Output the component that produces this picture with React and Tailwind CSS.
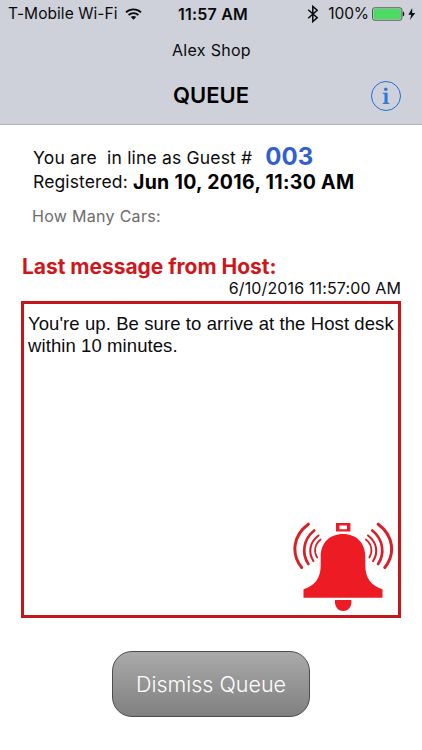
import { clsx } from "clsx";

const guest = {
  number: "003",
  registered: "Jun 10, 2016, 11:30 AM",
};

const message = {
  sentAt: "6/10/2016 11:57:00 AM",
  body: "You're up. Be sure to arrive at the Host desk within 10 minutes.",
};

function WifiIcon({ className }) {
  return (
    <svg viewBox="0 0 17 12" className={className} fill="none" stroke="#0b0b0d" strokeWidth="1.8">
      <path d="M1 4.4C5.2.3 11.8.3 16 4.4" />
      <path d="M3.6 7C6.4 4.4 10.6 4.4 13.4 7" />
      <path d="M8.5 11.8 5.8 9.1C7.3 7.7 9.7 7.7 11.2 9.1Z" fill="#0b0b0d" stroke="none" />
    </svg>
  );
}

function BluetoothIcon({ className }) {
  return (
    <svg viewBox="0 0 12 18" className={className} fill="none" stroke="#0b0b0d" strokeWidth="1.5">
      <path d="M1.2 4.8 10.2 12.8 5.8 16.6V1.4L10.2 5.2 1.2 13.2" />
    </svg>
  );
}

function BatteryIcon({ className }) {
  return (
    <svg viewBox="0 0 44 14" className={className}>
      <rect x="0.5" y="0.8" width="29.4" height="12.4" rx="2" fill="#c6d5cb" stroke="#55585c" strokeWidth="1" />
      <rect x="1.5" y="1.8" width="27.4" height="10.4" rx="1" fill="#4cd964" />
      <path d="M30.8 4.6c2 .6 2 4.2 0 4.8Z" fill="#0b0b0d" />
      <path d="M40.2 1 36.4 7.7h2.9L37.9 13l5.3-6.9h-3Z" fill="#0b0b0d" />
    </svg>
  );
}

function BellIcon({ className }) {
  return (
    <svg viewBox="0 0 102 92" className={className}>
      <g fill="#ed1c24">
        <path fillRule="evenodd" d="M44 1h14.4v8.6H44Zm3.4 2.5v3.7h7.6V3.5Z" />
        <path d="M51 12c13.5 0 22.3 9.2 22.3 22.5v9C73.3 56 79 63.5 90.5 67.3v8.4h-79v-8.4C23 63.5 28.7 56 28.7 43.5v-9C28.7 21.2 37.5 12 51 12Z" />
        <path d="M43 78h16.4c.8 6.2-2.8 11-8.2 11s-9-4.8-8.2-11Z" />
      </g>
      <g fill="none" stroke="#d92029" strokeLinecap="round">
        <path d="M16.3 2.2C1 13.5-1.2 32 9.7 45.5" strokeWidth="3" />
        <path d="M22.2 8.5C11 17.5 9.5 32 16.4 42" strokeWidth="2.7" />
        <path d="M26.5 13.5C17.5 20.5 16 30.5 21.4 39" strokeWidth="2.1" />
        <path d="M28.6 17.5C22.5 22.5 21.5 29.5 25.2 35.5" strokeWidth="1.7" />
        <path d="M86.2 2.2C101.5 13.5 103.7 32 92.8 45.5" strokeWidth="3" />
        <path d="M80.3 8.5C91.5 17.5 93 32 86.1 42" strokeWidth="2.7" />
        <path d="M76 13.5C85 20.5 86.5 30.5 81.1 39" strokeWidth="2.1" />
        <path d="M73.9 17.5C80 22.5 81 29.5 77.3 35.5" strokeWidth="1.7" />
      </g>
    </svg>
  );
}

function StatusBar() {
  return (
    <div className="grid h-7 grid-cols-[1fr_auto_1fr] items-center pr-[6px] pl-2 leading-7">
      <div className="flex items-center gap-2">
        <span className="text-[15.5px] tracking-[0.05px]">T-Mobile Wi-Fi</span>
        <WifiIcon className="h-[12px] w-[17px]" />
      </div>
      <span className="pl-[2px] text-[16px] font-semibold tracking-[0.2px]">11:57 AM</span>
      <div className="flex items-center justify-end">
        <BluetoothIcon className="mr-[9px] h-[18px] w-3" />
        <span className="mr-[3px] text-[15.5px] tracking-[-0.1px]">100%</span>
        <BatteryIcon className="h-[14px] w-11" />
      </div>
    </div>
  );
}

function Header() {
  return (
    <header className="flex h-[125px] flex-col border-b border-[#b2b2b7] bg-[#ced1d9]">
      <StatusBar />
      <p className="mt-[10px] pl-px text-center text-[16px] leading-6 tracking-[0.3px]">Alex Shop</p>
      <div className="mt-[18px] grid grid-cols-[1fr_auto_1fr] items-center px-[21px]">
        <h1 className="col-start-2 text-[22px] leading-[31px] font-semibold text-black">QUEUE</h1>
        <button className="flex size-[30px] items-center justify-center justify-self-end rounded-full border border-[#1f72d8]" aria-label="Info">
          <svg viewBox="0 0 8 18" className="h-[18px] w-2" fill="#2c7bdc">
            <circle cx="3.8" cy="2.2" r="1.8" />
            <path d="M.8 5.8h4.8v9.6l1.7.6v.9H.8V16l1.7-.6V7.3L.8 6.7Z" />
          </svg>
        </button>
      </div>
    </header>
  );
}

export default function App() {
  return (
    <div
      className={clsx(
        "flex h-[750px] w-[422px] flex-col overflow-hidden bg-white text-[#0b0b0d]",
        "font-['Inter','Liberation_Sans',sans-serif]"
      )}
    >
      <Header />
      <main className="flex flex-1 flex-col">
        {/* Place in line */}
        <section className="mt-[21px] pl-[33px] text-[17.5px] leading-6">
          <p className="flex h-6 items-center whitespace-pre">
            <span className="tracking-[0.18px]">You are  in line as Guest #</span>
            <strong className="mb-[3px] ml-[13px] text-[24px] leading-6 font-bold text-[#315fd0]">{guest.number}</strong>
          </p>
          <p className="flex h-6 items-center whitespace-pre">
            <span className="tracking-[0.13px]">Registered: </span>
            <strong className="text-[19.5px] font-bold tracking-[0.31px] text-black">{guest.registered}</strong>
          </p>
          <p className="-ml-px mt-[10px] text-[16px] tracking-[0.3px] text-[#6c6c6c]">How Many Cars:</p>
        </section>

        {/* Host message */}
        <section className="mt-[25px] flex flex-col pr-[21px] pl-[21px]">
          <h2 className="pl-px text-[21px] leading-7 font-bold tracking-[-0.03px] text-[#d0161b]">Last message from Host:</h2>
          <time className="-mt-[3px] text-right text-[16px] leading-5 tracking-[0.13px]">{message.sentAt}</time>
          <div className="mt-[3px] flex h-[317px] flex-col justify-between border-[3px] border-[#c5161b] pt-[9px] pl-1 font-['Liberation_Sans',sans-serif]">
            <p className="text-[18.5px] leading-[22px] tracking-[0.09px]">{message.body}</p>
            <BellIcon className="mr-[4px] mb-[1px] h-[92px] w-[102px] self-end" />
          </div>
        </section>

        <button className="mt-[33px] h-[66px] w-[198px] self-center rounded-[20px] border border-[#4c4c4c] bg-linear-to-b from-[#aaaaaa] to-[#808080] text-[21.5px] font-[350] text-white">
          Dismiss Queue
        </button>
      </main>
    </div>
  );
}
